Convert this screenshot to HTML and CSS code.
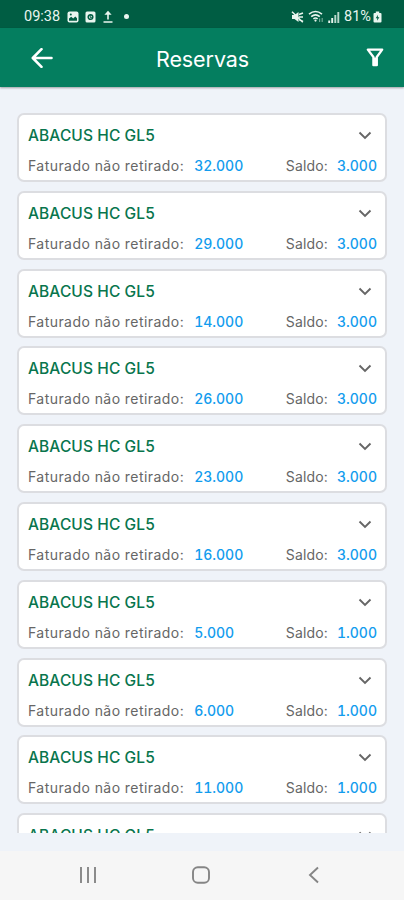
FILE: index.html
```html
<!DOCTYPE html>
<html lang="pt-BR">
<head>
    <meta charset="UTF-8">
    <meta name="viewport" content="width=device-width, initial-scale=1.0">
    <title>Reservas</title>
    <link rel="stylesheet" href="styles.css">
</head>
<body>
    <svg width="0" height="0" class="defs">
        <symbol id="chevron" viewBox="0 0 14 9">
            <path d="M1.5 1.5 L7 7 L12.5 1.5" fill="none" stroke="#666" stroke-width="1.9"/>
        </symbol>
    </svg>

    <div class="status-bar">
        <div class="status-left">
            <span class="clock">09:38</span>
            <svg class="icon-picture" width="12" height="12" viewBox="0 0 12 12">
                <rect x="0.5" y="0.5" width="11" height="11" rx="2" fill="#e9f5ef"/>
                <path d="M2 9.8 V7.6 L4.2 5.8 L6.2 7.6 L8.3 5.4 L10 7.2 V9.8 Z" fill="#005d43"/>
                <circle cx="3.8" cy="3.4" r="1" fill="#005d43"/>
            </svg>
            <svg class="icon-box" width="11" height="12" viewBox="0 0 11 12">
                <rect x="0.5" y="0.5" width="10" height="11" rx="1.5" fill="#e9f5ef"/>
                <circle cx="5.5" cy="6" r="2.3" fill="none" stroke="#005d43" stroke-width="1.5"/>
                <path d="M5.2 4 V6.4 H6.8" fill="none" stroke="#005d43"/>
            </svg>
            <svg class="icon-upload" width="10" height="13" viewBox="0 0 10 13">
                <path d="M5 9.5 V2.5 M0.5 12 H9.5" fill="none" stroke="#e9f5ef" stroke-width="1.6"/>
                <path d="M1.4 4.8 L5 0.8 L8.6 4.8 Z" fill="#e9f5ef"/>
            </svg>
            <span class="dot"></span>
        </div>
        <div class="status-right">
            <svg width="13" height="12" viewBox="0 0 13 12">
                <path d="M1 4 H3.5 L7.5 1 V11 L3.5 8 H1 Z" fill="#e9f5ef"/>
                <path d="M8 3.5 L12 2 M8 6 H12 M8 8.5 L12 10.5 M1 0.8 L11.8 11.3" fill="none" stroke="#e9f5ef" stroke-width="1.5"/>
            </svg>
            <svg class="icon-wifi" width="17" height="13" viewBox="0 0 17 13">
                <path d="M1 4.2 Q7.5 -1.2 14 4.2 M3.2 6.6 Q7.5 3 11.8 6.6 M5.4 8.8 Q7.5 7.2 9.6 8.8" fill="none" stroke="#e9f5ef" stroke-width="1.6"/>
                <circle cx="7.5" cy="10.6" r="1.1" fill="#e9f5ef"/>
                <path d="M11.6 8.5 V12 M14.2 8 V12" stroke="#6fa893" stroke-width="1.2"/>
            </svg>
            <svg class="icon-signal" width="12" height="12" viewBox="0 0 12 12">
                <path d="M1.2 12 V9.5 M4.2 12 V7" stroke="#e9f5ef" stroke-width="1.9"/>
                <path d="M7.3 12 V4 M10.3 12 V1" stroke="#b9d8cc" stroke-width="1.9"/>
            </svg>
            <span class="battery-level">81%</span>
            <svg class="icon-battery" width="9" height="12" viewBox="0 0 9 12">
                <path d="M2.8 0.5 H6.2 V2 H7.5 Q8.5 2 8.5 3 V10.5 Q8.5 11.5 7.5 11.5 H1.5 Q0.5 11.5 0.5 10.5 V3 Q0.5 2 1.5 2 H2.8 Z" fill="#e9f5ef"/>
                <path d="M5 3.8 L2.7 7.2 H4.3 L4 9.8 L6.4 6.2 H4.8 Z" fill="#005d43"/>
            </svg>
        </div>
    </div>

    <header class="app-bar">
        <svg class="back" width="22" height="20" viewBox="0 0 22 20">
            <path d="M20.5 10 H2 M10.5 1.2 L1.8 10 L10.5 18.8" fill="none" stroke="#fff" stroke-width="2.6" stroke-linecap="round" stroke-linejoin="round"/>
        </svg>
        <h1>Reservas</h1>
        <svg class="filter" width="18" height="19" viewBox="0 0 18 19">
            <path d="M1.8 1.6 H16.2 L10.8 9 V17.2 H7.4 V9 Z" fill="none" stroke="#fff" stroke-width="2.3" stroke-linejoin="round"/>
            <path d="M9.1 9.5 V17" stroke="#fff" stroke-width="2.4"/>
        </svg>
    </header>

    <main class="list">
        <div class="card">
            <div class="card-top"><h2>ABACUS HC GL5</h2><svg class="chevron"><use href="#chevron"/></svg></div>
            <div class="card-info"><span class="label">Faturado não retirado:</span><span class="value">32.000</span><span class="label balance">Saldo:</span><span class="value">3.000</span></div>
        </div>
        <div class="card">
            <div class="card-top"><h2>ABACUS HC GL5</h2><svg class="chevron"><use href="#chevron"/></svg></div>
            <div class="card-info"><span class="label">Faturado não retirado:</span><span class="value">29.000</span><span class="label balance">Saldo:</span><span class="value">3.000</span></div>
        </div>
        <div class="card">
            <div class="card-top"><h2>ABACUS HC GL5</h2><svg class="chevron"><use href="#chevron"/></svg></div>
            <div class="card-info"><span class="label">Faturado não retirado:</span><span class="value">14.000</span><span class="label balance">Saldo:</span><span class="value">3.000</span></div>
        </div>
        <div class="card">
            <div class="card-top"><h2>ABACUS HC GL5</h2><svg class="chevron"><use href="#chevron"/></svg></div>
            <div class="card-info"><span class="label">Faturado não retirado:</span><span class="value">26.000</span><span class="label balance">Saldo:</span><span class="value">3.000</span></div>
        </div>
        <div class="card">
            <div class="card-top"><h2>ABACUS HC GL5</h2><svg class="chevron"><use href="#chevron"/></svg></div>
            <div class="card-info"><span class="label">Faturado não retirado:</span><span class="value">23.000</span><span class="label balance">Saldo:</span><span class="value">3.000</span></div>
        </div>
        <div class="card">
            <div class="card-top"><h2>ABACUS HC GL5</h2><svg class="chevron"><use href="#chevron"/></svg></div>
            <div class="card-info"><span class="label">Faturado não retirado:</span><span class="value">16.000</span><span class="label balance">Saldo:</span><span class="value">3.000</span></div>
        </div>
        <div class="card">
            <div class="card-top"><h2>ABACUS HC GL5</h2><svg class="chevron"><use href="#chevron"/></svg></div>
            <div class="card-info"><span class="label">Faturado não retirado:</span><span class="value">5.000</span><span class="label balance">Saldo:</span><span class="value">1.000</span></div>
        </div>
        <div class="card">
            <div class="card-top"><h2>ABACUS HC GL5</h2><svg class="chevron"><use href="#chevron"/></svg></div>
            <div class="card-info"><span class="label">Faturado não retirado:</span><span class="value">6.000</span><span class="label balance">Saldo:</span><span class="value">1.000</span></div>
        </div>
        <div class="card">
            <div class="card-top"><h2>ABACUS HC GL5</h2><svg class="chevron"><use href="#chevron"/></svg></div>
            <div class="card-info"><span class="label">Faturado não retirado:</span><span class="value">11.000</span><span class="label balance">Saldo:</span><span class="value">1.000</span></div>
        </div>
        <div class="card">
            <div class="card-top"><h2>ABACUS HC GL5</h2><svg class="chevron"><use href="#chevron"/></svg></div>
        </div>
    </main>

    <nav class="nav-bar">
        <svg width="18" height="18" viewBox="0 0 18 18">
            <path d="M2 1 V17 M9 1 V17 M16 1 V17" stroke="#8b8b8b" stroke-width="2"/>
        </svg>
        <svg width="18" height="18" viewBox="0 0 18 18">
            <rect x="1" y="1.2" width="16" height="15.6" rx="4.8" fill="none" stroke="#858585" stroke-width="1.9"/>
        </svg>
        <svg width="18" height="18" viewBox="0 0 18 18">
            <path d="M13 1.5 L5 9 L13 16.5" fill="none" stroke="#858585" stroke-width="1.9"/>
        </svg>
    </nav>
</body>
</html>
```
FILE: styles.css
```css
* { margin: 0; padding: 0; box-sizing: border-box; }

body {
    width: 404px;
    height: 900px;
    display: flex;
    flex-direction: column;
    overflow: hidden;
    background: #eff3f9;
    font-family: Inter, "Open Sans", sans-serif;
}

svg {
    display: block;
    flex: none;
}

.defs {
    display: none;
}

/* Status bar */
.status-bar {
    flex: none;
    height: 28px;
    padding: 5px 22px 0 24px;
    display: flex;
    justify-content: space-between;
    align-items: center;
    background: #005d43;
    color: #e9f5ef;
    font-family: Roboto, sans-serif;
    font-size: 14.5px;
}

.status-left,
.status-right {
    display: flex;
    align-items: center;
}

.clock {
    width: 37px;
}

.icon-picture {
    margin-left: 6px;
}

.icon-box {
    margin-left: 6px;
}

.icon-upload {
    margin-left: 7px;
}

.dot {
    width: 5px;
    height: 5px;
    margin-left: 11px;
    border-radius: 50%;
    background: #e9f5ef;
}

.icon-wifi {
    margin-left: 4px;
}

.icon-signal {
    margin-left: 3px;
}

.battery-level {
    width: 28px;
    margin-left: 4px;
}

.icon-battery {
    margin-left: 1px;
}

/* App bar */
.app-bar {
    flex: none;
    height: 59px;
    padding: 0 20px 0 31px;
    display: flex;
    justify-content: space-between;
    align-items: center;
    background: #047e5f;
    color: #fff;
    box-shadow: 0 1px 2px rgba(0, 0, 0, 0.35);
}

.app-bar h1 {
    margin-right: 14px;
    padding-top: 2px;
    font-size: 21.5px;
    font-weight: 400;
    letter-spacing: -0.1px;
}

/* Reservation list */
.list {
    flex: none;
    height: 720px;
    margin-top: 26px;
    padding: 0 17px;
    display: flex;
    flex-direction: column;
    gap: 8.8px;
    overflow: hidden;
}

.card {
    flex: none;
    height: 69px;
    padding: 10.5px 8px 0 9px;
    background: #fff;
    border: 2px solid #dcdde1;
    border-radius: 7px;
}

.card-top {
    height: 20px;
    display: flex;
    justify-content: space-between;
    align-items: center;
}

.card h2 {
    font-size: 15.5px;
    font-weight: 500;
    letter-spacing: 0.1px;
    color: #08754d;
}

.chevron {
    width: 14px;
    height: 9px;
    margin-right: 5px;
}

.card-info {
    height: 20px;
    margin-top: 10px;
    display: flex;
    align-items: center;
    font-size: 14px;
}

.label {
    color: #666;
    letter-spacing: 0.44px;
}

.value {
    margin-left: 10px;
    color: #129cee;
    font-weight: 500;
    font-variant-numeric: tabular-nums;
}

.balance {
    margin-left: auto;
    letter-spacing: 0.15px;
}

.balance + .value {
    margin-left: 9px;
}

/* System navigation */
.nav-bar {
    flex: none;
    height: 49px;
    margin-top: auto;
    padding: 0 81px 2px 79px;
    display: flex;
    justify-content: space-between;
    align-items: center;
    background: #f6f6f6;
}
```
